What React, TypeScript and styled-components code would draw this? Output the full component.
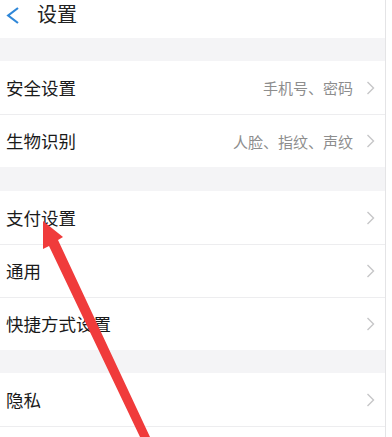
import React from "react";
import styled, { createGlobalStyle } from "styled-components";

const Global = createGlobalStyle`
  html, body { margin: 0; padding: 0; background: #ffffff; }
  body { font-family: "Noto Sans CJK SC", "Noto Sans", sans-serif; overflow: hidden; }
`;

const Page = styled.div`
  position: relative;
  width: 385px;
  height: 437px;
  overflow: hidden;
  background: #f4f4f6;
  border-right: 1px solid #e4e4e6;
`;

const Header = styled.div`
  height: 38px;
  background: #ffffff;
  display: flex;
  align-items: flex-start;
  padding-left: 6px;
  box-sizing: border-box;
`;

const BackIcon = styled.svg`
  width: 13px;
  height: 17px;
  margin-top: 7px;
`;

const Title = styled.div`
  margin-left: 18px;
  margin-top: 4px;
  font-size: 20px;
  color: #222;
  line-height: 1;
`;

const Section = styled.div<{ $gap: number }>`
  margin-top: ${(p) => p.$gap}px;
  background: #ffffff;
`;

const Row = styled.div<{ $first?: boolean }>`
  height: 53px;
  display: flex;
  align-items: center;
  padding: 0 10px 0 6px;
  box-sizing: border-box;
  border-top: ${(p) => (p.$first ? "none" : "1px solid #ededef")};
`;

const Label = styled.div`
  flex: 1;
  font-size: 17.5px;
  color: #1a1a1a;
  line-height: 1;
`;

const Value = styled.div`
  font-size: 15px;
  color: #8d8d8d;
  line-height: 1;
  margin-right: 13px;
`;

const Chevron = styled.svg`
  width: 9px;
  height: 14px;
  flex: none;
`;

const Arrow = styled.svg`
  position: absolute;
  left: 0;
  top: 0;
  width: 392px;
  height: 437px;
  pointer-events: none;
`;

const ChevronIcon = () => (
  <Chevron viewBox="0 0 9 14">
    <path d="M1.5 1 L7.5 7 L1.5 13" fill="none" stroke="#c6c6c8" strokeWidth="1.4" />
  </Chevron>
);

type Item = { label: string; value?: string };

const sections: { gap: number; items: Item[] }[] = [
  {
    gap: 23,
    items: [
      { label: "安全设置", value: "手机号、密码" },
      { label: "生物识别", value: "人脸、指纹、声纹" },
    ],
  },
  {
    gap: 24,
    items: [{ label: "支付设置" }, { label: "通用" }, { label: "快捷方式设置" }],
  },
  {
    gap: 23,
    items: [{ label: "隐私" }, { label: "" }],
  },
];

export default function App() {
  return (
    <>
      <Global />
      <Page>
        <Header>
          <BackIcon viewBox="0 0 13 17">
            <path d="M12 1 L2.2 8.5 L12 16" fill="none" stroke="#2f87d8" strokeWidth="2.2" />
          </BackIcon>
          <Title>设置</Title>
        </Header>
        {sections.map((s, si) => (
          <Section key={si} $gap={s.gap}>
            {s.items.map((it, i) => (
              <Row key={i} $first={i === 0}>
                <Label>{it.label}</Label>
                {it.value && <Value>{it.value}</Value>}
                {it.label && <ChevronIcon />}
              </Row>
            ))}
          </Section>
        ))}
        <Arrow viewBox="0 0 392 437">
          <polygon
            points="43,221 63,237 58,240 150,437 140,437 49,246 43,249"
            fill="#f03b3b"
          />
        </Arrow>
      </Page>
    </>
  );
}
